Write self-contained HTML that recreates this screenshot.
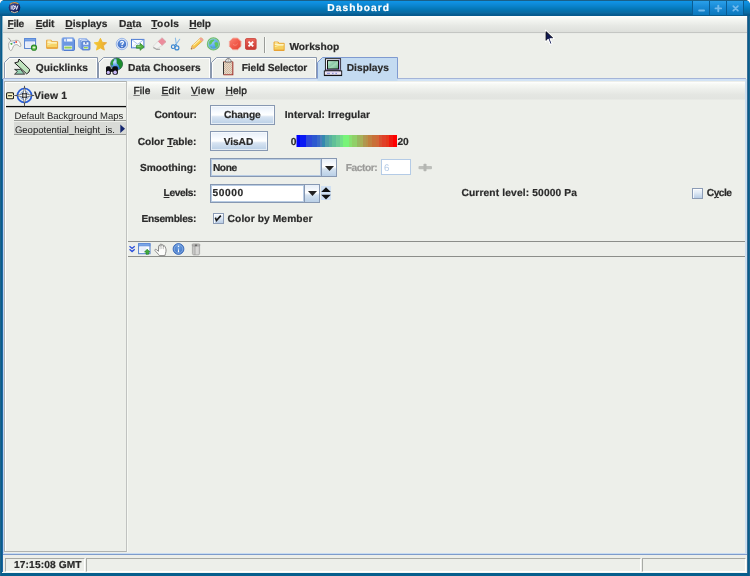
<!DOCTYPE html>
<html><head><meta charset="utf-8"><title>Dashboard</title>
<style>
html,body{margin:0;padding:0;background:#fff;}
#win{position:relative;width:750px;height:576px;overflow:hidden;background:#065e8c;border-radius:5px 5px 0 0;font-family:'Liberation Sans',sans-serif;}
#win div,#win svg{position:absolute;box-sizing:border-box;}
.t{white-space:pre;text-rendering:geometricPrecision;}
#txt{left:0;top:0;width:750px;height:576px;will-change:transform;filter:opacity(0.999);}
.t u{text-decoration:underline;text-decoration-thickness:1px;text-underline-offset:0.6px;}

</style></head>
<body>
<div id="win">
<div style="left:0px;top:0px;width:750px;height:16px;background:linear-gradient(to bottom,#1a6088 0px,#1a6088 1px,#0e96e8 1px,#0e8ad8 4px,#0a84cc 6px,#0478b8 9px,#0470ac 11px,#0c6aa0 13px,#065e94 14px,#04588a 16px);"></div>
<div style="left:0px;top:16px;width:1px;height:560px;background:#1e628c;"></div>
<div style="left:749px;top:16px;width:1px;height:560px;background:#1e628c;"></div>
<div style="left:2px;top:16px;width:1px;height:557px;background:#2064a0;"></div>
<div style="left:747px;top:16px;width:1px;height:557px;background:#3a6c94;"></div>
<div style="left:2px;top:16px;width:745px;height:557px;background:#edefea;"></div>
<div style="left:2px;top:16px;width:1px;height:557px;background:#2064a0;"></div>
<div style="left:693px;top:1px;width:16px;height:14px;background:linear-gradient(to bottom,#2aa0ea,#1a8cd8 40%,#0a78bc);"></div>
<div style="left:710px;top:1px;width:16px;height:14px;background:linear-gradient(to bottom,#2aa0ea,#1a8cd8 40%,#0a78bc);"></div>
<div style="left:727px;top:1px;width:16px;height:14px;background:linear-gradient(to bottom,#2aa0ea,#1a8cd8 40%,#0a78bc);"></div>
<div style="left:692px;top:1px;width:1px;height:14px;background:#0a5c92;"></div>
<div style="left:709px;top:1px;width:1px;height:14px;background:#0a5c92;"></div>
<div style="left:726px;top:1px;width:1px;height:14px;background:#0a5c92;"></div>
<div style="left:743px;top:1px;width:1px;height:14px;background:#0a5c92;"></div>
<svg style="left:692px;top:0" width="52" height="16" viewBox="0 0 52 16"><g fill="none" stroke="#72baec" stroke-linecap="round"><path d="M7.2 10.500h4.800" stroke-width="2"/><path d="M26.300 5.600v5.600M23.500 8.400h5.600" stroke-width="1.900"/><path d="M41.300 6.100l4.600 4.600M45.900 6.100l-4.600 4.600" stroke-width="1.700"/></g></svg>
<svg style="left:8px;top:1px" width="13" height="13" viewBox="0 0 13 13"><defs><radialGradient id="gi" cx="40%" cy="35%" r="70%"><stop offset="0" stop-color="#3a4a9a"/><stop offset="1" stop-color="#10184a"/></radialGradient></defs><circle cx="6.5" cy="6.5" r="5.8" fill="url(#gi)"/><path d="M2 3.2 Q6 0.2 10.5 3" stroke="#c89a50" stroke-width="1.2" fill="none"/><path d="M3 10.5 Q6.5 12.8 10 10.5" stroke="#d8d0b0" stroke-width="1" fill="none"/><path d="M3.2 4.5v4M4.8 4.5v4M4.8 4.5q2 0 2 2t-2 2M7.3 4.5l1.3 4 1.3-4" stroke="#e8e8f4" stroke-width="1" fill="none"/></svg>
<div style="left:2px;top:16px;width:745px;height:16px;background:linear-gradient(to bottom,#ffffff 0,#f7f9f5 2px,#eff1ed 6px,#e6e8e4 10px,#dddfdb 16px);"></div>
<div style="left:2px;top:32px;width:745px;height:1px;background:#c4c6c3;"></div>
<div style="left:2px;top:33px;width:745px;height:1px;background:#eaece8;"></div>
<div style="left:2px;top:16px;width:1px;height:63px;background:#8fb4c8;"></div>
<div style="left:264px;top:37px;width:1px;height:16px;background:#9a9c98;"></div>
<div style="left:265px;top:37px;width:1px;height:16px;background:#f8faf6;"></div>
<div style="left:3px;top:78px;width:743px;height:1px;background:#a4b4d8;"></div>
<div style="left:3px;top:79px;width:744px;height:2px;background:#d2e3f5;"></div>
<div style="left:3px;top:79px;width:1px;height:475px;background:#b8d0ee;"></div>
<div style="left:745px;top:79px;width:2px;height:475px;background:#cadef0;"></div>
<svg style="left:4px;top:57px" width="94" height="21" viewBox="0 0 94 21"><polygon points="0.5,21 0.5,5.5 5.5,0.5 93.5,0.5 93.5,21" fill="#edefea" stroke="none"/><polyline points="1.5,21 1.5,6 6,1.5 92.5,1.5 92.5,21" fill="none" stroke="#ffffff" stroke-opacity="0.9" stroke-width="1"/><polyline points="0.5,21 0.5,5.5 5.5,0.5 93.5,0.5 93.5,21" fill="none" stroke="#8a98ae" stroke-width="1"/></svg>
<svg style="left:98px;top:57px" width="113" height="21" viewBox="0 0 113 21"><polygon points="0.5,21 0.5,5.5 5.5,0.5 112.5,0.5 112.5,21" fill="#edefea" stroke="none"/><polyline points="1.5,21 1.5,6 6,1.5 111.5,1.5 111.5,21" fill="none" stroke="#ffffff" stroke-opacity="0.9" stroke-width="1"/><polyline points="0.5,21 0.5,5.5 5.5,0.5 112.5,0.5 112.5,21" fill="none" stroke="#8a98ae" stroke-width="1"/></svg>
<svg style="left:211px;top:57px" width="106" height="21" viewBox="0 0 106 21"><polygon points="0.5,21 0.5,5.5 5.5,0.5 105.5,0.5 105.5,21" fill="#edefea" stroke="none"/><polyline points="1.5,21 1.5,6 6,1.5 104.5,1.5 104.5,21" fill="none" stroke="#ffffff" stroke-opacity="0.9" stroke-width="1"/><polyline points="0.5,21 0.5,5.5 5.5,0.5 105.5,0.5 105.5,21" fill="none" stroke="#8a98ae" stroke-width="1"/></svg>
<svg style="left:317px;top:57px" width="81" height="24" viewBox="0 0 81 24"><polygon points="0.5,24 0.5,5.5 5.5,0.5 80.5,0.5 80.5,24" fill="#c4dbf1" stroke="none"/><polyline points="0.5,21.5 0.5,5.5 5.5,0.5 80.5,0.5 80.5,21.5" fill="none" stroke="#7f9ad0" stroke-width="1"/></svg>
<div style="left:3px;top:553px;width:744px;height:1px;background:#c8dcf2;"></div>
<div style="left:3px;top:554px;width:744px;height:1px;background:#7e9ccc;"></div>
<div style="left:4px;top:81px;width:123px;height:471px;background:#edefea;border:1px solid #b0b3b0;border-right-color:#c0c2c0"></div>
<div style="left:5px;top:82px;width:121px;height:1px;background:#fcfefc;"></div>
<div style="left:5px;top:82px;width:1px;height:469px;background:#ffffff;"></div>
<div style="left:127px;top:82px;width:1px;height:470px;background:#f6f8f3;"></div>
<div style="left:6px;top:106px;width:120px;height:1px;background:#0a0a0a;"></div>
<div style="left:6px;top:107px;width:120px;height:1px;background:#b8bab6;"></div>
<div style="left:6px;top:105px;width:120px;height:1px;background:#dcdeda;"></div>
<svg style="left:6px;top:92px" width="8" height="8" viewBox="0 0 8 8"><rect x="0.600" y="0.700" width="6.900" height="6" rx="1" fill="#fdf8c8" stroke="#1c1c16" stroke-width="1.100"/><path d="M2 3.700h4.100" stroke="#111" stroke-width="1.100"/></svg>
<svg style="left:14px;top:85px" width="22" height="22" viewBox="0 0 22 22"><circle cx="10.500" cy="10.500" r="7" fill="none" stroke="#2a5fd8" stroke-width="1.700"/><circle cx="10.500" cy="10.500" r="4.300" fill="none" stroke="#5c86e0" stroke-width="0.700"/><path d="M10.500 0.800v20.600M0.600 10.500h19.600" stroke="#333" stroke-width="0.800"/><path d="M10.500 1.800l1.500 7.400h-3zM10.500 19.200l1.500-7.400h-3zM1.800 10.500l7.400-1.500v3zM19.200 10.500l-7.400-1.500v3z" fill="#ffffff" stroke="#333" stroke-width="0.550"/><path d="M8 8l1 1M13 8l-1 1M8 13l1-1M13 13l-1-1" stroke="#1a2a5a" stroke-width="1.100"/><rect x="8.800" y="8.800" width="3.400" height="3.400" fill="#e8e8e8" stroke="#222" stroke-width="0.900"/></svg>
<div style="left:13px;top:95px;width:2px;height:1px;background:#8a8c88;"></div>
<div style="left:14px;top:120px;width:112px;height:1px;background:#9a9c98;"></div>
<div style="left:14px;top:122px;width:112px;height:13px;background:#d9dbd7;"></div>
<div style="left:14px;top:134px;width:112px;height:1px;background:#9a9c98;"></div>
<svg style="left:120px;top:124px" width="6" height="10" viewBox="0 0 6 10"><path d="M0.3 0.6L5 4.8 0.3 9z" fill="#14266e"/></svg>
<div style="left:128px;top:82px;width:617px;height:18px;background:linear-gradient(to bottom,#ffffff 0,#f7f9f5 2px,#eef0ec 7px,#e4e6e2 13px,#e2e4e0 17px,#edefea 18px);"></div>
<div style="left:210px;top:105px;width:65px;height:20px;background:linear-gradient(to bottom,#e6eef8 0,#f8fbff 35%,#ffffff 50%,#d8e4f2 60%,#b9cfe6 100%);border:1px solid #8798b2;box-shadow:inset 0 0 0 1px rgba(255,255,255,.6)"></div>
<div style="left:210px;top:131px;width:58px;height:20px;background:linear-gradient(to bottom,#e6eef8 0,#f8fbff 35%,#ffffff 50%,#d8e4f2 60%,#b9cfe6 100%);border:1px solid #8798b2;box-shadow:inset 0 0 0 1px rgba(255,255,255,.6)"></div>
<div style="left:296px;top:135px;width:101px;height:12px;background:linear-gradient(to right,#0000ff 0.1px,#0000ff 3.7px,#0a1af5 3.7px,#0a1af5 9.5px,#2e48d8 9.5px,#2e48d8 15.6px,#2c58d0 15.6px,#2c58d0 21.4px,#3868c8 21.4px,#3868c8 23.6px,#4c7cba 23.6px,#4c7cba 26.4px,#3488b0 26.4px,#3488b0 29.3px,#50a0a8 29.3px,#50a0a8 32.9px,#58b0a0 32.9px,#58b0a0 35.8px,#60c098 35.8px,#60c098 40.1px,#6ecc96 40.1px,#6ecc96 43.6px,#72e088 43.6px,#72e088 46.6px,#78f478 46.6px,#78f478 52.6px,#88e070 52.6px,#88e070 55.6px,#90d068 55.6px,#90d068 60.6px,#98b860 60.6px,#98b860 63.8px,#a8b058 63.8px,#a8b058 66.6px,#b09850 66.6px,#b09850 69.6px,#b89048 69.6px,#b89048 72.4px,#c08040 72.4px,#c08040 76.4px,#c87038 76.4px,#c87038 80.0px,#d06838 80.0px,#d06838 83.2px,#d85030 83.2px,#d85030 86.5px,#e04028 86.5px,#e04028 89.7px,#e4381c 89.7px,#e4381c 92.6px,#f01810 92.6px,#f01810 96.6px,#ff0000 96.6px,#ff0000 100.6px);"></div>
<div style="left:296px;top:135px;width:1px;height:12px;background:rgba(237,239,234,0.5);"></div>
<div style="left:210px;top:158px;width:127px;height:19px;background:#edefea;border:1px solid #8798b2"></div>
<div style="left:211px;top:159px;width:110px;height:17px;background:transparent;border:1px solid #b8cce4"></div>
<div style="left:321px;top:159px;width:15px;height:17px;background:linear-gradient(to bottom,#e6eef8 0,#ffffff 45%,#d4e2f0 60%,#b9cfe6 100%);border-left:1px solid #8798b2"></div>
<svg style="left:325px;top:166px" width="9" height="5" viewBox="0 0 9 5"><path d="M0 0h9L4.5 5z" fill="#222"/></svg>
<div style="left:381px;top:159px;width:30px;height:16px;background:#ffffff;border:1px solid #b4cbe6"></div>
<svg style="left:418px;top:163px" width="15" height="9" viewBox="0 0 15 9"><rect x="0.5" y="3" width="13.5" height="3.2" rx="1" fill="#bdbfbb"/><rect x="5.5" y="0.8" width="3" height="7.4" rx="0.8" fill="#b4b6b2"/></svg>
<div style="left:210px;top:184px;width:110px;height:19px;background:#ffffff;border:1px solid #8798b2"></div>
<div style="left:211px;top:185px;width:93px;height:17px;background:#ffffff;border:1px solid #b8cce4"></div>
<div style="left:304px;top:185px;width:15px;height:17px;background:linear-gradient(to bottom,#e6eef8 0,#ffffff 45%,#d4e2f0 60%,#b9cfe6 100%);border-left:1px solid #8798b2"></div>
<svg style="left:308px;top:191px" width="9" height="5" viewBox="0 0 9 5"><path d="M0 0h9L4.5 5z" fill="#222"/></svg>
<div style="left:321px;top:186px;width:10px;height:14px;background:#d0e0f2;"></div>
<svg style="left:321px;top:187px" width="10" height="13" viewBox="0 0 10 13"><path d="M0.2 5L5 0.3 9.8 5z" fill="#111"/><path d="M0.2 7.8h9.6L5 12.5z" fill="#111"/></svg>
<div style="left:213px;top:213px;width:11px;height:11px;background:linear-gradient(to bottom,#f2f6fb 0,#e4edf7 35%,#b9cde5 100%);border:1px solid #8c9cb6;box-shadow:inset 1px 1px 0 0 rgba(255,255,255,.8)"></div>
<svg style="left:213px;top:213px" width="11" height="11" viewBox="0 0 11 11"><path d="M2.300 4.600L3.500 7.500 7.800 2.600" fill="none" stroke="#1a1a1a" stroke-width="1.600"/></svg>
<div style="left:692px;top:188px;width:11px;height:11px;background:linear-gradient(to bottom,#f2f6fb 0,#e4edf7 35%,#b9cde5 100%);border:1px solid #8c9cb6;box-shadow:inset 1px 1px 0 0 rgba(255,255,255,.8)"></div>
<div style="left:128px;top:241px;width:617px;height:1px;background:#8c8e8a;"></div>
<div style="left:128px;top:256px;width:617px;height:1px;background:#8c8e8a;"></div>
<div style="left:5px;top:558px;width:80px;height:14px;background:#edefea;border:1px solid;border-color:#a8aaa6 #ffffff #ffffff #a8aaa6"></div>
<div style="left:86px;top:558px;width:555px;height:14px;background:#edefea;border:1px solid;border-color:#a8aaa6 #ffffff #ffffff #a8aaa6"></div>
<div style="left:642px;top:558px;width:104px;height:14px;background:#edefea;border:1px solid;border-color:#a8aaa6 #ffffff #ffffff #a8aaa6"></div>
<div style="left:2px;top:572px;width:745px;height:1px;background:#f4f6f2;"></div>
<svg style="left:7px;top:37px" width="15" height="15" viewBox="0 0 15 15"><path d="M1.3 0.8l3 3.6" stroke="#8c8c8a" stroke-width="0.9" fill="none"/><path d="M2 5.600C3.400 3.600 6 4.200 7.600 3.600 9.200 3 11.400 3.200 12.400 4.600 13.400 6.200 14.200 8.400 13.700 9.300 13 10.200 11.800 9 11 8 9.600 7.200 7.600 7.800 6.600 8.800 5.800 10.200 5.400 13 4 13.600 2.400 13.900 1 9.400 2 5.600z" fill="#fbfbf9" stroke="#a4a4a2" stroke-width="0.9"/><path d="M2.900 6.800l2.600-1.200-0.400 2.600z" fill="#48a848"/><circle cx="7.300" cy="5.600" r="0.950" fill="#4a7ae0"/><circle cx="9.200" cy="4.900" r="1" fill="#e85048"/></svg>
<svg style="left:24px;top:38px" width="14" height="14" viewBox="0 0 14 14"><rect x="0.600" y="0.600" width="11" height="9.800" fill="#fafbff" stroke="#4f7ccc" stroke-width="1"/><rect x="0.600" y="0.600" width="11" height="2.400" fill="#78a4e6" stroke="#5a88d8" stroke-width="0.8"/><rect x="2.200" y="4" width="7.800" height="5" fill="#e4ebf9"/><circle cx="10" cy="9.700" r="3.100" fill="#238223"/><circle cx="10" cy="9.700" r="2.200" fill="#5cb848"/><ellipse cx="10" cy="9.500" rx="1.500" ry="1" fill="#dcf2cc"/></svg>
<svg style="left:46px;top:39px" width="13" height="11" viewBox="0 0 13 11"><path d="M0.600 1.200h4.600l0.900 1.500h5.500v6.600H0.600z" fill="#f6d468" stroke="#e8a234" stroke-width="0.9"/><path d="M1.500 2.200h3.200M1.400 3.600h9.400" stroke="#fdf3c8" stroke-width="1.200" fill="none"/><path d="M1.400 5.800c2 0 2.400-1.400 4.400-1.400h5" stroke="#fbeaa0" stroke-width="1.200" fill="none"/><path d="M1 8.900h10.200" stroke="#e69a2c" stroke-width="1"/></svg>
<svg style="left:61px;top:37px" width="15" height="15" viewBox="0 0 15 15"><path d="M2.200 0.800h10l1.300 1.300v10.200a1.200 1.200 0 0 1-1.200 1.200H2.200A1.200 1.200 0 0 1 1 12.300V2A1.200 1.200 0 0 1 2.200 0.800z" fill="#6c98e2" stroke="#86a9e8" stroke-width="0.900"/><path d="M13.500 3v9.400c0 0.600-0.500 1.100-1.200 1.100H3" stroke="#4d78cc" stroke-width="0.9" fill="none"/><rect x="3.300" y="1.800" width="8.200" height="2.900" fill="#c9daf6"/><path d="M3.800 2.300v1.800M6 2.300h5M6 3.600h5" stroke="#ffffff" stroke-width="0.9"/><rect x="5" y="1.800" width="0.700" height="2.900" fill="#6c98e2"/><rect x="3.100" y="8.800" width="8" height="3.600" fill="#fbfdf8"/><rect x="3.500" y="9.600" width="7.200" height="1.900" fill="#86c440"/><path d="M3.500 10.550h7.200" stroke="#a8dc70" stroke-width="0.5"/></svg>
<svg style="left:78px;top:38px" width="13" height="13" viewBox="0 0 13 13"><rect x="0.600" y="0.400" width="8.200" height="9" rx="1" fill="#a9c4f0" stroke="#86a8e6" stroke-width="0.800"/><rect x="2" y="0.900" width="5.400" height="1.300" fill="#f2f6fe"/><rect x="2.200" y="1.900" width="8.200" height="9" rx="1" fill="#94b6ec" stroke="#7298e0" stroke-width="0.800"/><rect x="3.600" y="2.400" width="5.400" height="1.300" fill="#f2f6fe"/><rect x="3.900" y="3.400" width="8.100" height="8.600" rx="1" fill="#6c96e0" stroke="#4c76cc" stroke-width="0.800"/><rect x="5.200" y="4.300" width="5.200" height="2.400" fill="#f6f9ff"/><rect x="7" y="4.300" width="1.600" height="1.400" fill="#3c5ca8"/><rect x="5.600" y="8.600" width="4.600" height="2.300" fill="#fbfdf8"/><rect x="6" y="9.100" width="3.800" height="1.300" fill="#90d040"/></svg>
<svg style="left:93px;top:37px" width="15" height="15" viewBox="0 0 15 15"><defs><linearGradient id="sg" x1="0" y1="0" x2="1" y2="0"><stop offset="0" stop-color="#f4c634"/><stop offset="0.500" stop-color="#f0bc30"/><stop offset="1" stop-color="#e8a43c"/></linearGradient></defs><path d="M7.400 1.300l1.900 4 4.300 0.500-3.200 3 0.900 4.300-3.900-2.200-3.900 2.200 0.900-4.300-3.200-3 4.300-0.500z" fill="url(#sg)" stroke="url(#sg)" stroke-width="0.900" stroke-linejoin="round"/></svg>
<svg style="left:115px;top:37px" width="14" height="14" viewBox="0 0 14 14"><defs><radialGradient id="hg" cx="50%" cy="35%" r="70%"><stop offset="0" stop-color="#6c9ce4"/><stop offset="1" stop-color="#3a68c0"/></radialGradient></defs><circle cx="6.900" cy="7" r="5.700" fill="#dde8fa" stroke="#88a8e2" stroke-width="0.800"/><circle cx="6.900" cy="7" r="4.300" fill="url(#hg)"/><path d="M5.600 5.800c0-1.900 2.800-1.900 2.800-0.200 0 1.100-1.400 1.200-1.400 2.400" stroke="#fff" stroke-width="1.200" fill="none"/><circle cx="7" cy="9.500" r="0.750" fill="#fff"/></svg>
<svg style="left:131px;top:38px" width="14" height="13" viewBox="0 0 14 13"><rect x="0.500" y="1.400" width="12.400" height="8.400" fill="#fcfdff" stroke="#4c7ad2" stroke-width="1"/><path d="M1 1.900l5.700 4.300 5.700-4.300" stroke="#9ab8ec" stroke-width="0.900" fill="none"/><path d="M1 9.400l4.200-3.600M12.400 9.400l-4.200-3.600" stroke="#c4d6f4" stroke-width="0.700" fill="none"/><path d="M5.400 7.400h3.700V5.300l4.100 3.500-4.100 3.500v-2.100H5.400z" fill="#52b03e" stroke="#2c8428" stroke-width="0.700" stroke-linejoin="round"/><path d="M6.200 8.300h3.400" stroke="#a8dc98" stroke-width="0.700"/></svg>
<svg style="left:152px;top:37px" width="15" height="14" viewBox="0 0 15 14"><path d="M5.700 4.600L9.900 0.700 14 4.700 9.900 8.500z" fill="#ec8c9c"/><path d="M5.700 4.600L9.900 8.500 4.600 12 1 9.500z" fill="#f2f2f0"/><path d="M9.900 0.700L14 4.700 9.900 8.500 4.600 12 1 9.500 5.700 4.600z" fill="none" stroke="#d0d0ce" stroke-width="0.600"/><path d="M9.900 0.700L14 4.700 9.900 8.500" fill="none" stroke="#e07888" stroke-width="0.500"/><path d="M1.300 10.400l3.600 2 3.200-0.200" stroke="#a4a4a2" stroke-width="1.100" fill="none"/></svg>
<svg style="left:170px;top:37px" width="12" height="15" viewBox="0 0 12 15"><path d="M5.400 1.100l0.900 6.600M9.700 2.300L6 7.400" stroke="#8cbce6" stroke-width="1.100" fill="none" stroke-linecap="round"/><circle cx="3.200" cy="9.700" r="1.800" fill="none" stroke="#3c88d2" stroke-width="1.150"/><circle cx="6.900" cy="10.900" r="2" fill="none" stroke="#3c88d2" stroke-width="1.150"/><path d="M4.600 8.400l1.500-1.200M6.400 8.800l-0.200-1.400" stroke="#3c88d2" stroke-width="1"/></svg>
<svg style="left:190px;top:37px" width="15" height="14" viewBox="0 0 15 14"><path d="M1 12.200l1-3.400 8.200-7.600c1.200-1 3.600 1.400 2.500 2.500l-8.300 7.500z" fill="#f6c94a" stroke="#e49c34" stroke-width="0.800"/><path d="M3.400 8.400l7-6.400" stroke="#fdf0b0" stroke-width="1.100"/><path d="M10.200 1.200c1.200-1 3.600 1.400 2.500 2.500l-0.900 0.800-2.500-2.500z" fill="#f0a0a0"/><path d="M1 12.200l0.900-3.100 2.200 2.200z" fill="#e4b484"/><path d="M1 12.200l0.400-1.200 0.800 0.800z" fill="#555"/></svg>
<svg style="left:206px;top:37px" width="15" height="15" viewBox="0 0 15 15"><defs><radialGradient id="gg" cx="38%" cy="32%" r="75%"><stop offset="0" stop-color="#9cd0f8"/><stop offset="0.600" stop-color="#54a2ea"/><stop offset="1" stop-color="#3c88d8"/></radialGradient></defs><circle cx="7.400" cy="6.900" r="6" fill="url(#gg)" stroke="#6cbc6c" stroke-width="1.200"/><circle cx="7.400" cy="6.900" r="5.200" fill="none" stroke="#b8e4b0" stroke-width="0.500"/><path d="M3.300 4.800c1.200-2 3.800-2.800 5.200-1.800-0.600 1.400-2 1.400-2.400 2.800-0.400 1.400-1.400 1.200-2.200 2.200-0.800-1-1-2.200-0.600-3.200zM8.800 5.600c1.200-0.800 2.800-0.400 3.400 0.800 0.200 1.800-0.800 3.600-2.400 4.400-0.800-1-0.200-2-0.800-3-0.400-0.800-0.800-1.400-0.200-2.200z" fill="#5cc85c"/><path d="M4.600 9.200c1 0 1.800 0.800 1.800 1.800-0.800 0-1.600-0.800-1.800-1.800z" fill="#5cc85c"/></svg>
<svg style="left:228px;top:37px" width="14" height="14" viewBox="0 0 14 14"><defs><linearGradient id="st" x1="0" y1="0" x2="1" y2="1"><stop offset="0" stop-color="#fa8474"/><stop offset="0.500" stop-color="#f25c4c"/><stop offset="1" stop-color="#e44434"/></linearGradient></defs><path d="M4.800 1.100h4.800l3.400 3.400v4.800l-3.400 3.400H4.800L1.400 9.300V4.500z" fill="url(#st)" stroke="#f4a89c" stroke-width="0.900"/><path d="M5 7.400c1.600 1.400 3.400 1 4.600-0.600" stroke="#f88c7c" stroke-width="0.900" fill="none"/></svg>
<svg style="left:245px;top:38px" width="12" height="12" viewBox="0 0 12 12"><defs><linearGradient id="rx" x1="0" y1="0" x2="0" y2="1"><stop offset="0" stop-color="#ec685c"/><stop offset="1" stop-color="#c83830"/></linearGradient></defs><rect x="0.500" y="0.600" width="10.600" height="10.800" rx="1.300" fill="url(#rx)" stroke="#c8443c" stroke-width="0.900"/><path d="M3.500 3.600l4.700 4.800M8.200 3.600L3.500 8.400" stroke="#fff" stroke-width="1.900"/></svg>
<svg style="left:273px;top:41px" width="13" height="11" viewBox="0 0 13 11"><path d="M1 1h4.200l0.900 1.300h5.100v7.200H1z" fill="#f6d060" stroke="#e8a634" stroke-width="0.900"/><path d="M1.800 2h2.800M1.800 3.500h8.800" stroke="#fdf4cc" stroke-width="1.100" fill="none"/><path d="M1.800 5.600c1.800 0 2.200-1.200 4-1.200h4.600" stroke="#fbeaa0" stroke-width="1.100" fill="none"/><path d="M1.400 9.100h9.600" stroke="#e69a2c" stroke-width="0.9"/></svg>
<svg style="left:14px;top:58px" width="17" height="18" viewBox="0 0 17 18"><path d="M0.600 11.400h6l4 4.800H0.600l2.900-2.900z" fill="#94d2b2" stroke="#1a1a1a" stroke-width="0.800" stroke-linejoin="round"/><path d="M0.800 16.300h10" stroke="#777" stroke-width="1.100"/><path d="M5 1l10.600 10.400-0.500 2.400-2.400 2.100L0.700 4.900l3.600-1z" fill="#bfe3bd" stroke="#111" stroke-width="0.950" stroke-linejoin="round"/></svg>
<svg style="left:105px;top:57px" width="19" height="19" viewBox="0 0 19 19"><defs><radialGradient id="dg" cx="35%" cy="30%" r="60%"><stop offset="0" stop-color="#c8e4fc"/><stop offset="0.550" stop-color="#5a9ce8"/><stop offset="1" stop-color="#2c78c8"/></radialGradient></defs><circle cx="11.600" cy="7.100" r="6" fill="url(#dg)" stroke="#183818" stroke-width="0.600"/><path d="M11 1.200c3-0.400 6 1.800 6.500 5 0.200 2.400-0.800 4-2 5.200-1.400-0.400-1-2-2-3.200-1.200-1.200-2.200-2-1.800-3.600 0.200-1.400-0.200-2.400-0.700-3.400z" fill="#1c8c2c"/><path d="M6 5.400c0.600-1.600 1.800-2.800 3.200-3.400 0.400 1-0.400 2.200-1.200 3-0.400 1.200 0.400 2.200-0.200 3.400-0.800 0.200-1.600-0.400-2-1.400z" fill="#2a9a34"/><rect x="1" y="9.200" width="4.800" height="8.600" rx="1.600" fill="#0c0c10"/><rect x="7.500" y="9.200" width="5.400" height="8.600" rx="1.700" fill="#0c0c10"/><rect x="4.800" y="11.600" width="3.600" height="3.200" fill="#0c0c10"/><circle cx="3.300" cy="15.400" r="1.650" fill="#c8b8f4"/><circle cx="10.100" cy="15.400" r="1.800" fill="#c8b8f4"/></svg>
<svg style="left:222px;top:57px" width="13" height="19" viewBox="0 0 13 19"><defs><pattern id="ck" width="2" height="2" patternUnits="userSpaceOnUse"><rect width="2" height="2" fill="#d2baa0"/><rect width="1" height="1" fill="#e6d8ca"/><rect x="1" y="1" width="1" height="1" fill="#e6d8ca"/></pattern></defs><rect x="1.600" y="4.600" width="9" height="13" rx="0.800" fill="url(#ck)"/><path d="M1.500 4.800v12.800" stroke="#333" stroke-width="1"/><path d="M1.500 17.800h9.300V4.800" stroke="#a2362e" stroke-width="1.100" fill="none"/><path d="M1.500 4.700h9.300" stroke="#a85048" stroke-width="0.800"/><path d="M3.400 5c0-4.600 5.800-4.600 5.800 0z" fill="#f0f0f0" stroke="#555" stroke-width="0.800"/><circle cx="6.300" cy="3" r="0.700" fill="#999"/></svg>
<svg style="left:323px;top:58px" width="20" height="19" viewBox="0 0 20 19"><defs><linearGradient id="scr" x1="0" y1="0" x2="1" y2="1"><stop offset="0" stop-color="#c4ecd2"/><stop offset="0.450" stop-color="#8cc8a8"/><stop offset="0.550" stop-color="#a4d8b8"/><stop offset="1" stop-color="#62ac84"/></linearGradient></defs><rect x="2.400" y="0.700" width="15.200" height="11.600" fill="#f4f2f8" stroke="#111" stroke-width="0.900"/><rect x="15.300" y="1.200" width="1.900" height="10.800" fill="#b8a2e2"/><rect x="3" y="10.800" width="14.200" height="1.300" fill="#a890d4"/><rect x="4.500" y="2.600" width="11" height="8.400" fill="url(#scr)" stroke="#111" stroke-width="1"/><rect x="1.300" y="12.900" width="17.400" height="4.400" fill="#ebe4f4" stroke="#111" stroke-width="0.900"/><path d="M1 17.500h18" stroke="#111" stroke-width="1.100"/><path d="M4 15.300h3M9 15.300h1.600M12.400 15.300h1.600" stroke="#5a6ac8" stroke-width="0.800"/><path d="M3 14h13" stroke="#d0c4e8" stroke-width="0.700"/></svg>
<svg style="left:129px;top:245px" width="7" height="8" viewBox="0 0 7 8"><path d="M0.500 1.200l2.600 2.200 2.600-2.200M0.500 4.300l2.600 2.300 2.600-2.300" stroke="#2c50dc" stroke-width="1.300" fill="none"/></svg>
<svg style="left:138px;top:243px" width="13" height="12" viewBox="0 0 13 12"><rect x="0.600" y="0.700" width="11.400" height="10" fill="#fbfcff" stroke="#4f7ccc" stroke-width="1"/><rect x="0.600" y="0.700" width="11.400" height="2.200" fill="#7eaae8" stroke="#5a88d8" stroke-width="0.800"/><rect x="2.200" y="4.200" width="6" height="4.600" fill="#e8eefa"/><path d="M9.200 6.200l2.700 2.900h-1.400v2.200H8V9.100H6.500z" fill="#3eaa3e" stroke="#1e7e1e" stroke-width="0.600"/></svg>
<svg style="left:154px;top:243px" width="15" height="13" viewBox="0 0 15 13"><path d="M5.300 12.600C4.400 10.800 2.200 9.200 1 7.600c-0.600-1 0.500-1.700 1.400-1l2.100 1.700V3.300c0-1.100 1.600-1.100 1.600 0V1.900c0-1.200 1.700-1.200 1.700 0v0.700c0-1.100 1.700-1.100 1.700 0v1c0-1 1.600-1 1.600 0.100l0.600 1.500c0.900 2.200 0 4.400-0.800 7.400z" fill="#fdfdfb" stroke="#7a7a78" stroke-width="0.850" stroke-linejoin="round"/><path d="M6.100 3.400v2.800M7.800 2.800v3.200M9.500 3.600v2.600" stroke="#a8a8a6" stroke-width="0.600"/></svg>
<svg style="left:172px;top:243px" width="13" height="13" viewBox="0 0 13 13"><defs><radialGradient id="ig" cx="50%" cy="35%" r="70%"><stop offset="0" stop-color="#6a9ee0"/><stop offset="1" stop-color="#3a6cc0"/></radialGradient></defs><circle cx="6.500" cy="6" r="5.400" fill="url(#ig)" stroke="#3264b8" stroke-width="0.900"/><circle cx="6.500" cy="6" r="4.300" fill="none" stroke="#9abcea" stroke-width="0.700"/><circle cx="6.500" cy="3.300" r="0.750" fill="#fff"/><path d="M6.500 4.600l0.750 4.600h-1.500z" fill="#fff"/></svg>
<svg style="left:191px;top:243px" width="10" height="13" viewBox="0 0 10 13"><defs><linearGradient id="tg" x1="0" y1="0" x2="1" y2="0"><stop offset="0" stop-color="#d4d4d2"/><stop offset="0.350" stop-color="#b4b4b2"/><stop offset="0.600" stop-color="#dededc"/><stop offset="1" stop-color="#c6c6c4"/></linearGradient></defs><path d="M1.400 2.200h7.200v8.400c0 0.800-0.600 1.300-1.300 1.300H2.700c-0.700 0-1.300-0.500-1.300-1.300z" fill="url(#tg)" stroke="#9a9a98" stroke-width="0.700"/><rect x="1.200" y="1" width="7.600" height="1.900" rx="0.700" fill="#cacac8" stroke="#8a8a88" stroke-width="0.700"/><rect x="3.900" y="1.500" width="2.200" height="1.700" fill="#6a6a68"/></svg>
<svg style="left:543px;top:28px" width="14" height="19" viewBox="0 0 14 19"><path d="M2.500 2.200v11.600l2.700-2.500 2 5.200 1.900-0.800-2-5 3.900-0.200z" fill="#111a52" stroke="#ffffff" stroke-width="1.100" stroke-linejoin="round"/><path d="M3 3.600v9M3.300 3.800l6.600 6.200" stroke="#000" stroke-width="0.800" fill="none"/></svg>
<div id="txt">
<div class="t" style="left:327.30px;top:3.67px;font-size:10.2px;line-height:10.2px;font-weight:700;color:#ffffff;-webkit-text-stroke:0.2px #ffffff;letter-spacing:1.060px">Dashboard</div>
<div class="t" style="left:7.60px;top:19.67px;font-size:10.2px;line-height:10.2px;font-weight:700;color:#2a2a2a;-webkit-text-stroke:0.2px #2a2a2a;letter-spacing:-0.287px"><u>F</u>ile</div>
<div class="t" style="left:35.70px;top:19.67px;font-size:10.2px;line-height:10.2px;font-weight:700;color:#2a2a2a;-webkit-text-stroke:0.2px #2a2a2a;letter-spacing:-0.183px"><u>E</u>dit</div>
<div class="t" style="left:65.30px;top:19.67px;font-size:10.2px;line-height:10.2px;font-weight:700;color:#2a2a2a;-webkit-text-stroke:0.2px #2a2a2a;letter-spacing:0.013px"><u>D</u>isplays</div>
<div class="t" style="left:119.00px;top:19.67px;font-size:10.2px;line-height:10.2px;font-weight:700;color:#2a2a2a;-webkit-text-stroke:0.2px #2a2a2a;letter-spacing:0.069px">D<u>a</u>ta</div>
<div class="t" style="left:151.30px;top:19.67px;font-size:10.2px;line-height:10.2px;font-weight:700;color:#2a2a2a;-webkit-text-stroke:0.2px #2a2a2a;letter-spacing:0.320px"><u>T</u>ools</div>
<div class="t" style="left:189.30px;top:19.67px;font-size:10.2px;line-height:10.2px;font-weight:700;color:#2a2a2a;-webkit-text-stroke:0.2px #2a2a2a;letter-spacing:-0.126px"><u>H</u>elp</div>
<div class="t" style="left:289.40px;top:42.87px;font-size:10.2px;line-height:10.2px;font-weight:700;color:#2a2a2a;-webkit-text-stroke:0.2px #2a2a2a;letter-spacing:0.039px">Workshop</div>
<div class="t" style="left:35.70px;top:63.67px;font-size:10.2px;line-height:10.2px;font-weight:700;color:#2a2a2a;-webkit-text-stroke:0.2px #2a2a2a;letter-spacing:0.085px">Quicklinks</div>
<div class="t" style="left:128.00px;top:63.67px;font-size:10.2px;line-height:10.2px;font-weight:700;color:#2a2a2a;-webkit-text-stroke:0.2px #2a2a2a;letter-spacing:0.066px">Data Choosers</div>
<div class="t" style="left:241.70px;top:63.67px;font-size:10.2px;line-height:10.2px;font-weight:700;color:#2a2a2a;-webkit-text-stroke:0.2px #2a2a2a;letter-spacing:-0.093px">Field Selector</div>
<div class="t" style="left:346.70px;top:63.67px;font-size:10.2px;line-height:10.2px;font-weight:700;color:#2a2a2a;-webkit-text-stroke:0.2px #2a2a2a;letter-spacing:0.056px">Displays</div>
<div class="t" style="left:34.00px;top:91.50px;font-size:10.4px;line-height:10.4px;font-weight:700;color:#2a2a2a;-webkit-text-stroke:0.2px #2a2a2a;letter-spacing:0.169px">View 1</div>
<div class="t" style="left:14.40px;top:111.86px;font-size:9.5px;line-height:9.5px;font-weight:400;color:#1a1a1a;letter-spacing:-0.019px">Default Background Maps</div>
<div class="t" style="left:14.90px;top:125.66px;font-size:9.5px;line-height:9.5px;font-weight:400;color:#1a1a1a;letter-spacing:0.012px">Geopotential_height_is.</div>
<div class="t" style="left:133.40px;top:86.67px;font-size:10.2px;line-height:10.2px;font-weight:400;color:#222222;-webkit-text-stroke:0.35px #222222;letter-spacing:0.193px"><u style="text-decoration-color:#777">F</u>ile</div>
<div class="t" style="left:161.40px;top:86.67px;font-size:10.2px;line-height:10.2px;font-weight:400;color:#222222;-webkit-text-stroke:0.35px #222222;letter-spacing:0.346px"><u style="text-decoration-color:#777">E</u>dit</div>
<div class="t" style="left:191.00px;top:86.67px;font-size:10.2px;line-height:10.2px;font-weight:400;color:#222222;-webkit-text-stroke:0.35px #222222;letter-spacing:0.498px"><u style="text-decoration-color:#777">V</u>iew</div>
<div class="t" style="left:225.40px;top:86.67px;font-size:10.2px;line-height:10.2px;font-weight:400;color:#222222;-webkit-text-stroke:0.35px #222222;letter-spacing:0.216px"><u style="text-decoration-color:#777">H</u>elp</div>
<div class="t" style="left:154.40px;top:111.07px;font-size:10.2px;line-height:10.2px;font-weight:700;color:#2a2a2a;-webkit-text-stroke:0.2px #2a2a2a;letter-spacing:-0.057px">Contour:</div>
<div class="t" style="left:137.70px;top:137.87px;font-size:10.2px;line-height:10.2px;font-weight:700;color:#2a2a2a;-webkit-text-stroke:0.2px #2a2a2a;letter-spacing:0.003px">Color <u>T</u>able:</div>
<div class="t" style="left:140.00px;top:163.67px;font-size:10.2px;line-height:10.2px;font-weight:700;color:#2a2a2a;-webkit-text-stroke:0.2px #2a2a2a;letter-spacing:-0.022px">Smoothing:</div>
<div class="t" style="left:163.60px;top:189.17px;font-size:10.2px;line-height:10.2px;font-weight:700;color:#2a2a2a;-webkit-text-stroke:0.2px #2a2a2a;letter-spacing:-0.385px"><u>L</u>evels:</div>
<div class="t" style="left:141.50px;top:214.67px;font-size:10.2px;line-height:10.2px;font-weight:700;color:#2a2a2a;-webkit-text-stroke:0.2px #2a2a2a;letter-spacing:-0.254px">Ensembles:</div>
<div class="t" style="left:224.00px;top:110.67px;font-size:10.2px;line-height:10.2px;font-weight:700;color:#2a2a2a;-webkit-text-stroke:0.2px #2a2a2a;letter-spacing:-0.132px">Change</div>
<div class="t" style="left:223.70px;top:137.87px;font-size:10.2px;line-height:10.2px;font-weight:700;color:#2a2a2a;-webkit-text-stroke:0.2px #2a2a2a;letter-spacing:-0.057px">VisAD</div>
<div class="t" style="left:284.70px;top:111.37px;font-size:10.2px;line-height:10.2px;font-weight:700;color:#2a2a2a;-webkit-text-stroke:0.2px #2a2a2a;letter-spacing:0.084px">Interval: Irregular</div>
<div class="t" style="left:290.80px;top:137.87px;font-size:10.2px;line-height:10.2px;font-weight:700;color:#2a2a2a;-webkit-text-stroke:0.2px #2a2a2a;letter-spacing:0.000px">0</div>
<div class="t" style="left:397.60px;top:137.87px;font-size:10.2px;line-height:10.2px;font-weight:700;color:#2a2a2a;-webkit-text-stroke:0.2px #2a2a2a;letter-spacing:-0.144px">20</div>
<div class="t" style="left:212.90px;top:163.67px;font-size:10.2px;line-height:10.2px;font-weight:700;color:#2a2a2a;-webkit-text-stroke:0.2px #2a2a2a;letter-spacing:-0.390px">None</div>
<div class="t" style="left:345.70px;top:163.67px;font-size:10.2px;line-height:10.2px;font-weight:700;color:#9a9a98;-webkit-text-stroke:0.2px #9a9a98;letter-spacing:-0.422px">Factor:</div>
<div class="t" style="left:384.00px;top:164.17px;font-size:9.6px;line-height:9.6px;font-weight:400;color:#b4cbe6;letter-spacing:0.000px">6</div>
<div class="t" style="left:212.40px;top:188.67px;font-size:10.2px;line-height:10.2px;font-weight:700;color:#2a2a2a;-webkit-text-stroke:0.2px #2a2a2a;letter-spacing:0.639px">50000</div>
<div class="t" style="left:461.40px;top:189.27px;font-size:10.2px;line-height:10.2px;font-weight:700;color:#2a2a2a;-webkit-text-stroke:0.2px #2a2a2a;letter-spacing:0.158px">Current level: 50000 Pa</div>
<div class="t" style="left:706.80px;top:188.97px;font-size:10.2px;line-height:10.2px;font-weight:700;color:#2a2a2a;-webkit-text-stroke:0.2px #2a2a2a;letter-spacing:-0.522px">C<u>y</u>cle</div>
<div class="t" style="left:227.60px;top:214.67px;font-size:10.2px;line-height:10.2px;font-weight:700;color:#2a2a2a;-webkit-text-stroke:0.2px #2a2a2a;letter-spacing:0.113px">Color by Member</div>
<div class="t" style="left:14.00px;top:560.87px;font-size:10.2px;line-height:10.2px;font-weight:700;color:#2a2a2a;-webkit-text-stroke:0.2px #2a2a2a;letter-spacing:0.123px">17:15:08 GMT</div>
</div>
</div>
</body></html>
